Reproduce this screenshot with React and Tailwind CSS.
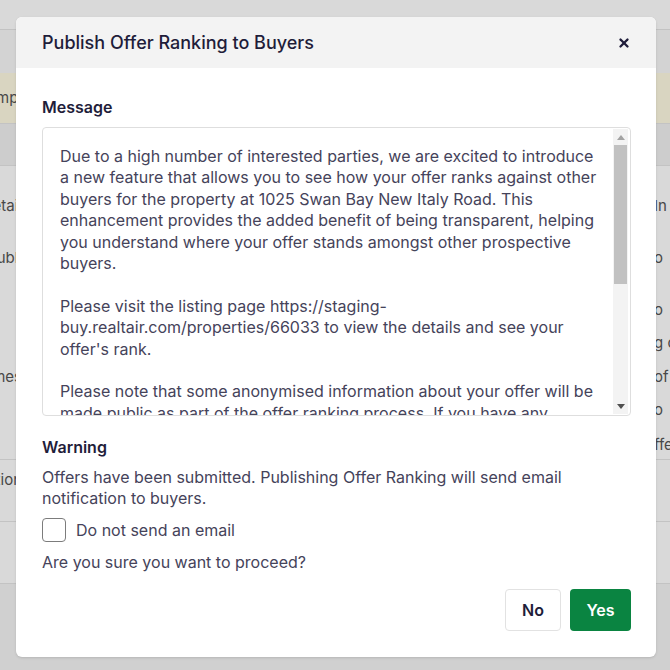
import React from 'react';
import { X } from 'lucide-react';

const messageLines = [
    'Due to a high number of interested parties, we are excited to introduce',
    'a new feature that allows you to see how your offer ranks against other',
    'buyers for the property at 1025 Swan Bay New Italy Road. This',
    'enhancement provides the added benefit of being transparent, helping',
    'you understand where your offer stands amongst other prospective',
    'buyers.',
    '',
    'Please visit the listing page https://staging-',
    'buy.realtair.com/properties/66033 to view the details and see your',
    "offer's rank.",
    '',
    'Please note that some anonymised information about your offer will be',
    'made public as part of the offer ranking process. If you have any',
    'questions, please contact the agent.',
];

// bits of the page that peek out on either side of the modal
const EdgeText = ({ left, right, className = '' }) => (
    <div className={`flex justify-between text-[15px] text-[#555] ${className}`}>
        <div className="w-[22px] overflow-hidden flex justify-end whitespace-nowrap">{left}</div>
        <div className="w-[16px] overflow-hidden flex justify-start whitespace-nowrap">{right}</div>
    </div>
);

const BackgroundPage = () => (
    <div className="flex flex-col w-full">
        <div className="h-[30px] bg-white border-b border-[#e4e4e4]" />
        <div className="h-[43px] bg-[#f8f8f8]" />
        <div className="h-[50px] bg-[#fffbe3] flex items-center">
            <EdgeText left="Sampl" right="" className="w-full text-[#2b3a6b]" />
        </div>
        <div className="h-[43px] bg-[#f1f1f1] border-y border-[#e6e6e6]" />
        <div className="bg-white">
            <EdgeText left="Detail" right="In" className="h-[20px] mt-[30px] items-center" />
            <EdgeText left="Publi" right="o" className="h-[20px] mt-[32px] items-center" />
            <EdgeText left="" right="o" className="h-[20px] mt-[32px] items-center" />
            <EdgeText left="" right="g c" className="h-[20px] mt-[13px] items-center" />
            <EdgeText left="Times" right="of" className="h-[20px] mt-[14px] items-center" />
            <EdgeText left="" right="o" className="h-[20px] mt-[13px] items-center" />
            <EdgeText left="" right="ffe" className="h-[20px] mt-[15px] items-center" />
            <div className="h-[5px] border-b border-[#e6e6e6]" />
            <EdgeText left="Notification" right="" className="h-[20px] mt-[10px] items-center" />
            <div className="h-[32px] border-b border-[#e6e6e6]" />
            <div className="h-[62px] border-b border-[#e6e6e6]" />
        </div>
        <div className="h-[100px] bg-[#f5f5f5]" />
    </div>
);

const FakeScrollbar = () => (
    <div className="w-[15px] my-[1px] mr-[2px] bg-[#f3f3f3] flex flex-col items-center">
        <div className="h-[16px] w-full flex items-center justify-center">
            <svg width="8" height="5" viewBox="0 0 8 5"><path d="M0 5 L4 0 L8 5 Z" fill="#a3a3a3" /></svg>
        </div>
        <div className="w-[13px] h-[139px] bg-[#c1c1c1]" />
        <div className="flex-1" />
        <div className="h-[16px] w-full flex items-center justify-center">
            <svg width="8" height="5" viewBox="0 0 8 5"><path d="M0 0 L4 5 L8 0 Z" fill="#505050" /></svg>
        </div>
    </div>
);

const Modal = () => (
    <div className="absolute left-[16px] top-[17px] w-[640px] h-[640px] bg-white rounded-[6px] overflow-hidden flex flex-col shadow-sm">
        <header className="h-[51px] bg-[#f3f3f3] pl-[26px] pr-[25px] flex items-center justify-between">
            <h1 className="text-[18px] font-medium text-[#1f1d3a]">Publish Offer Ranking to Buyers</h1>
            <button className="p-0">
                <X size={14} strokeWidth={4} color="#1f1d3a" />
            </button>
        </header>

        <div className="flex-1 flex flex-col pl-[26px] pr-[25px] pt-[29px] pb-[26px]">
            <h2 className="text-[16px] leading-[20px] font-semibold text-[#1f1d3a]">Message</h2>
            <div className="mt-[10px] h-[289px] border border-[#dedede] rounded-[4px] flex overflow-hidden">
                <div className="flex-1 overflow-hidden pl-[17px] pt-[18px] text-[16px] leading-[21.4px] text-[#45435a] whitespace-nowrap">
                    {messageLines.map((line, i) => (
                        <div key={i} className="h-[21.4px]">{line}</div>
                    ))}
                </div>
                <FakeScrollbar />
            </div>

            <h2 className="mt-[21px] text-[16px] leading-[20px] font-semibold text-[#1f1d3a]">Warning</h2>
            <p className="mt-[10px] text-[16px] leading-[21px] text-[#45435a]">
                Offers have been submitted. Publishing Offer Ranking will send email
                <br />
                notification to buyers.
            </p>
            <label className="mt-[9px] flex items-center gap-[10px]">
                <span className="w-[24px] h-[24px] rounded-[4px] border-[1.5px] border-[#7c7c7c] bg-white" />
                <span className="text-[16px] leading-[21px] text-[#45435a]">Do not send an email</span>
            </label>
            <p className="mt-[10px] text-[16px] leading-[21px] text-[#45435a]">Are you sure you want to proceed?</p>

            <div className="mt-auto flex justify-end gap-[9px]">
                <button className="w-[56px] h-[42px] rounded-[4px] border border-[#e2e2e2] bg-white text-[16px] font-semibold text-[#1f1d3a]">
                    No
                </button>
                <button className="w-[61px] h-[42px] rounded-[4px] bg-[#0a8441] text-[16px] font-semibold text-white">
                    Yes
                </button>
            </div>
        </div>
    </div>
);

export default function App() {
    return (
        <div className="relative h-[670px] overflow-hidden bg-white font-['Inter',sans-serif]">
            <BackgroundPage />
            <div className="absolute inset-0 bg-black/15" />
            <Modal />
        </div>
    );
}
